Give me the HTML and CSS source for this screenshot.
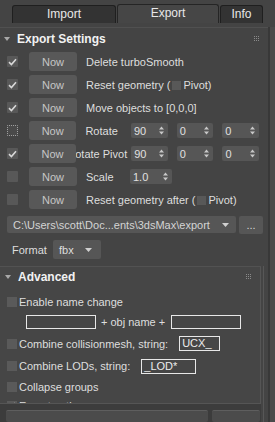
FILE: index.html
```html
<!DOCTYPE html>
<html lang="en">
<head>
    <meta charset="UTF-8">
    <meta name="viewport" content="width=device-width, initial-scale=1.0">
    <title>Exporter</title>
    <link rel="stylesheet" href="styles.css">
</head>
<body>
    <div class="tabs">
        <div class="tab">Import</div>
        <div class="tab active">Export</div>
        <div class="tab info">Info</div>
    </div>

    <div class="main">
        <div class="content">
            <section class="rollout">
                <div class="rollout-head">
                    <svg class="tri" width="6" height="4" viewBox="0 0 6 4"><path d="M0 0H6L3 4Z" fill="#a8a8a8"/></svg>
                    <span class="title">Export Settings</span>
                    <svg class="grip" width="6" height="6" viewBox="0 0 6 6" fill="#8a8a8a"><rect x="0" y="0" width="1" height="1"/><rect x="2" y="0" width="1" height="1"/><rect x="4" y="0" width="1" height="1"/><rect x="0" y="2" width="1" height="1"/><rect x="2" y="2" width="1" height="1"/><rect x="4" y="2" width="1" height="1"/><rect x="0" y="4" width="1" height="1"/><rect x="2" y="4" width="1" height="1"/><rect x="4" y="4" width="1" height="1"/></svg>
                </div>

                <div class="rows">
                    <div class="row">
                        <span class="cb checked"><svg width="9" height="8" viewBox="0 0 9 8"><path d="M1 4.2L3.4 6.5L8 1.2" stroke="#d8d8d8" stroke-width="1.6" fill="none"/></svg></span>
                        <button class="now">Now</button>
                        <span class="lbl">Delete turboSmooth</span>
                    </div>
                    <div class="row">
                        <span class="cb checked"><svg width="9" height="8" viewBox="0 0 9 8"><path d="M1 4.2L3.4 6.5L8 1.2" stroke="#d8d8d8" stroke-width="1.6" fill="none"/></svg></span>
                        <button class="now">Now</button>
                        <span class="lbl">Reset geometry (<span class="mini"></span>Pivot)</span>
                    </div>
                    <div class="row">
                        <span class="cb checked"><svg width="9" height="8" viewBox="0 0 9 8"><path d="M1 4.2L3.4 6.5L8 1.2" stroke="#d8d8d8" stroke-width="1.6" fill="none"/></svg></span>
                        <button class="now">Now</button>
                        <span class="lbl">Move objects to [0,0,0]</span>
                    </div>
                    <div class="row">
                        <span class="cb focus"></span>
                        <button class="now">Now</button>
                        <span class="lbl fixed">Rotate</span>
                        <div class="spin"><span>90</span><svg width="5" height="9" viewBox="0 0 5 9"><path d="M0 3.5H5L2.5 0.5Z M0 5.5H5L2.5 8.5Z" fill="#c8c8c8"/></svg></div>
                        <div class="spin"><span>0</span><svg width="5" height="9" viewBox="0 0 5 9"><path d="M0 3.5H5L2.5 0.5Z M0 5.5H5L2.5 8.5Z" fill="#c8c8c8"/></svg></div>
                        <div class="spin"><span>0</span><svg width="5" height="9" viewBox="0 0 5 9"><path d="M0 3.5H5L2.5 0.5Z M0 5.5H5L2.5 8.5Z" fill="#c8c8c8"/></svg></div>
                    </div>
                    <div class="row">
                        <span class="cb checked"><svg width="9" height="8" viewBox="0 0 9 8"><path d="M1 4.2L3.4 6.5L8 1.2" stroke="#d8d8d8" stroke-width="1.6" fill="none"/></svg></span>
                        <button class="now">Now</button>
                        <span class="lbl fixed right">Rotate Pivot</span>
                        <div class="spin"><span>90</span><svg width="5" height="9" viewBox="0 0 5 9"><path d="M0 3.5H5L2.5 0.5Z M0 5.5H5L2.5 8.5Z" fill="#c8c8c8"/></svg></div>
                        <div class="spin"><span>0</span><svg width="5" height="9" viewBox="0 0 5 9"><path d="M0 3.5H5L2.5 0.5Z M0 5.5H5L2.5 8.5Z" fill="#c8c8c8"/></svg></div>
                        <div class="spin"><span>0</span><svg width="5" height="9" viewBox="0 0 5 9"><path d="M0 3.5H5L2.5 0.5Z M0 5.5H5L2.5 8.5Z" fill="#c8c8c8"/></svg></div>
                    </div>
                    <div class="row">
                        <span class="cb"></span>
                        <button class="now">Now</button>
                        <span class="lbl scale">Scale</span>
                        <div class="spin wide"><span>1.0</span><svg width="5" height="9" viewBox="0 0 5 9"><path d="M0 3.5H5L2.5 0.5Z M0 5.5H5L2.5 8.5Z" fill="#c8c8c8"/></svg></div>
                    </div>
                    <div class="row">
                        <span class="cb"></span>
                        <button class="now">Now</button>
                        <span class="lbl">Reset geometry after (<span class="mini"></span>Pivot)</span>
                    </div>
                </div>

                <div class="path-row">
                    <div class="path">
                        <span>C:\Users\scott\Doc...ents\3dsMax\export</span>
                        <svg width="7" height="4" viewBox="0 0 7 4"><path d="M0 0H7L3.5 4Z" fill="#d0d0d0"/></svg>
                    </div>
                    <button class="dots">...</button>
                </div>

                <div class="format-row">
                    <span class="format-lbl">Format</span>
                    <div class="select">
                        <span>fbx</span>
                        <svg width="7" height="4" viewBox="0 0 7 4"><path d="M0 0H7L3.5 4Z" fill="#d0d0d0"/></svg>
                    </div>
                </div>
            </section>

            <div class="inner">
                <div class="inner-col">
                    <section class="adv">
                        <div class="rollout-head adv-head">
                            <svg class="tri" width="6" height="4" viewBox="0 0 6 4"><path d="M0 0H6L3 4Z" fill="#a8a8a8"/></svg>
                            <span class="title">Advanced</span>
                            <svg class="grip" width="6" height="6" viewBox="0 0 6 6" fill="#8a8a8a"><rect x="0" y="0" width="1" height="1"/><rect x="2" y="0" width="1" height="1"/><rect x="4" y="0" width="1" height="1"/><rect x="0" y="2" width="1" height="1"/><rect x="2" y="2" width="1" height="1"/><rect x="4" y="2" width="1" height="1"/><rect x="0" y="4" width="1" height="1"/><rect x="2" y="4" width="1" height="1"/><rect x="4" y="4" width="1" height="1"/></svg>
                        </div>
                        <div class="adv-body">
                            <div class="arow r1"><span class="acb"></span><span>Enable name change</span></div>
                            <div class="arow r2">
                                <span class="field f-pre"></span>
                                <span class="plus">+ obj name +</span>
                                <span class="field f-post"></span>
                            </div>
                            <div class="arow r3"><span class="acb"></span><span>Combine collisionmesh, string:</span><span class="field f-ucx">UCX_</span></div>
                            <div class="arow r4"><span class="acb"></span><span>Combine LODs, string:</span><span class="field f-lod">_LOD*</span></div>
                            <div class="arow r5"><span class="acb"></span><span>Collapse groups</span></div>
                            <div class="arow r6"><span class="acb checked"><svg width="8" height="7" viewBox="0 0 9 8"><path d="M1 4.2L3.4 6.5L8 1.2" stroke="#d8d8d8" stroke-width="1.6" fill="none"/></svg></span><span>Export options</span></div>
                        </div>
                    </section>
                    <div class="bottom">
                        <button class="bbtn big"></button>
                        <button class="bbtn small"></button>
                    </div>
                </div>
                <div class="inner-bar"></div>
            </div>
        </div>
        <div class="vbar"></div>
    </div>
</body>
</html>
```

FILE: styles.css
```css
* {
    box-sizing: border-box;
}
body {
    margin: 0;
    width: 275px;
    height: 422px;
    overflow: hidden;
    background: #444444;
    font-family: "Liberation Sans", Arial, sans-serif;
    font-size: 11px;
    color: #dedede;
}
button {
    font-family: inherit;
    font-size: 11px;
    border: none;
    padding: 0;
}

/* tabs */
.tabs {
    height: 27px;
    display: flex;
    align-items: flex-end;
    gap: 1px;
    padding: 0 0 4px 12px;
}
.tab {
    width: 104px;
    height: 18px;
    border: 1px solid #1f1f1f;
    border-bottom: none;
    border-radius: 3px 3px 0 0;
    background: #333333;
    color: #e8e8e8;
    font-size: 12px;
    text-align: center;
    line-height: 17px;
}
.tab.active {
    width: 102px;
    height: 19px;
    background: #464646;
    border-color: #252525;
}
.tab.info {
    width: 43px;
}

.main {
    display: flex;
    height: 395px;
}
.content {
    width: 268px;
}
.vbar {
    flex: 1;
    border-left: 2px solid #383838;
    background: #4a4a4a;
}

/* rollouts */
.rollout {
    border-top: 1px solid #505050;
}
.rollout-head {
    height: 22px;
    display: flex;
    align-items: center;
    padding-left: 4px;
}
.tri {
    margin-right: 7px;
}
.title {
    font-weight: bold;
    font-size: 12px;
    color: #f2f2f2;
}
.grip {
    margin-left: auto;
    margin-right: 8px;
}

.row {
    height: 23px;
    display: flex;
    align-items: center;
}
.cb {
    width: 11px;
    height: 11px;
    margin-left: 7px;
    background: #585858;
    border-radius: 1px;
    display: flex;
    align-items: center;
    justify-content: center;
}
.cb.focus {
    border: 1px dotted #a0a0a0;
    background: #4a4a4a;
}
.now {
    position: relative;
    margin-left: 11px;
    width: 48px;
    height: 19px;
    border-radius: 3px;
    background: #585858;
    color: #c6c6c6;
}
.lbl {
    margin-left: 9px;
    white-space: nowrap;
}
.lbl.fixed {
    width: 42px;
    display: flex;
    margin-right: 4px;
}
.lbl.right {
    justify-content: flex-end;
}
.lbl.scale {
    width: 40px;
    margin-right: 4px;
}
.mini {
    display: inline-block;
    width: 9px;
    height: 9px;
    margin: 0 2px 0 2px;
    background: #585858;
    vertical-align: -1px;
}
.spin {
    width: 37px;
    height: 15px;
    margin-right: 9px;
    border-radius: 2px;
    background: #565656;
    color: #e0e0e0;
    display: flex;
    align-items: center;
    justify-content: space-between;
    padding: 0 4px 0 3px;
}
.spin.wide {
    width: 42px;
}

.path-row {
    display: flex;
    margin-top: 5px;
    padding-left: 7px;
}
.path {
    width: 229px;
    height: 17px;
    border-radius: 2px;
    background: #565656;
    display: flex;
    align-items: center;
    justify-content: space-between;
    padding: 0 7px 0 6px;
    color: #d4d4d4;
    white-space: nowrap;
}
.dots {
    width: 24px;
    height: 18px;
    margin-left: 3px;
    border-radius: 2px;
    background: #565656;
    color: #d8d8d8;
}
.format-row {
    display: flex;
    align-items: center;
    margin-top: 6px;
    padding-left: 12px;
}
.format-lbl {
    width: 41px;
}
.select {
    width: 48px;
    height: 19px;
    border-radius: 2px;
    background: #565656;
    display: flex;
    align-items: center;
    justify-content: space-between;
    padding: 0 9px 0 6px;
}

/* inner scroll area */
.inner {
    display: flex;
    margin-top: 7px;
    height: 156px;
}
.inner-col {
    width: 263px;
    display: flex;
    flex-direction: column;
}
.inner-bar {
    width: 5px;
    margin-left: 2px;
    border-left: 1px solid #575757;
}
.adv {
    height: 140px;
    overflow: hidden;
    background: #464646;
    border-top: 1px solid #525252;
    border-right: 1px solid #555555;
    border-bottom: 1px solid #555555;
}
.adv-head {
    height: 20px;
    padding-left: 5px;
}
.adv-body {
    padding-top: 4px;
}
.arow {
    display: flex;
    align-items: center;
    padding-left: 7px;
    white-space: nowrap;
}
.r1 { height: 21px; }
.r2 { height: 20px; }
.r3 { height: 23px; }
.r4 { height: 22px; }
.r5 { height: 20px; }
.r6 { height: 17px; }
.acb {
    width: 10px;
    height: 10px;
    margin-right: 2px;
    background: #5a5a5a;
    display: flex;
    align-items: center;
    justify-content: center;
}
.field {
    height: 15px;
    border: 1px solid #e8e8e8;
    color: #ececec;
    padding-left: 2px;
    line-height: 13px;
}
.f-pre {
    width: 70px;
    height: 14px;
    margin-left: 19px;
}
.plus {
    margin: 0 6px 0 5px;
}
.f-post {
    width: 70px;
    height: 14px;
}
.f-ucx {
    width: 41px;
    margin-left: 11px;
}
.f-lod {
    width: 55px;
    margin-left: 11px;
}
.bottom {
    flex: 1;
    background: #3c3c3c;
    display: flex;
    gap: 4px;
    padding: 6px 0 0 6px;
}
.bbtn {
    height: 12px;
    border-radius: 2px;
    border-top: 1px solid #5e5e5e;
    background: #4b4b4b;
}
.bbtn.big {
    width: 202px;
}
.bbtn.small {
    width: 48px;
}
```
